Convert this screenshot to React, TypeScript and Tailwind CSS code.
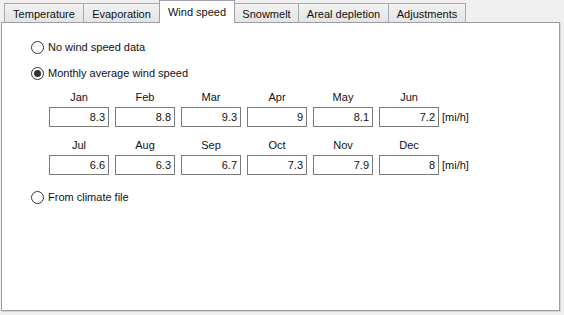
import React from "react";

const tabs = [
  { label: "Temperature", w: 80 },
  { label: "Evaporation", w: 77 },
  { label: "Wind speed", w: 76, selected: true },
  { label: "Snowmelt", w: 65 },
  { label: "Areal depletion", w: 91 },
  { label: "Adjustments", w: 78 },
];

const row1 = [
  ["Jan", "8.3"],
  ["Feb", "8.8"],
  ["Mar", "9.3"],
  ["Apr", "9"],
  ["May", "8.1"],
  ["Jun", "7.2"],
];
const row2 = [
  ["Jul", "6.6"],
  ["Aug", "6.3"],
  ["Sep", "6.7"],
  ["Oct", "7.3"],
  ["Nov", "7.9"],
  ["Dec", "8"],
];

function Radio({ checked, label }: { checked?: boolean; label: string }) {
  return (
    <div className="flex items-center h-[14px] gap-[4px]">
      <div className="w-[13px] h-[13px] rounded-full border border-[#333] bg-white flex items-center justify-center">
        {checked && <div className="w-[7px] h-[7px] rounded-full bg-[#333]" />}
      </div>
      <span className="leading-[14px]">{label}</span>
    </div>
  );
}

function MonthRow({ items, className }: { items: string[][]; className?: string }) {
  return (
    <div className={"flex ml-[18px] " + (className || "")}>
      <div className="flex gap-[6px]">
        {items.map(([m, v]) => (
          <div key={m} className="flex flex-col w-[60px]">
            <div className="h-[14px] leading-[14px] text-center">{m}</div>
            <div className="mt-[3px] h-[20px] border border-[#7a7a7a] bg-white flex items-center justify-end pr-[3px]">
              {v}
            </div>
          </div>
        ))}
      </div>
      <div className="ml-[3px] mt-[17px] h-[20px] flex items-center">[mi/h]</div>
    </div>
  );
}

export default function App() {
  return (
    <div
      className="w-[564px] h-[315px] bg-[#f0f0f0] text-[11px] text-[#111] overflow-hidden"
      style={{ fontFamily: '"Liberation Sans", Arial, sans-serif' }}
    >
      <div className="flex items-end h-[22px] pl-[4px]">
        {tabs.map((t, i) =>
          t.selected ? (
            <div
              key={t.label}
              className="relative z-10 -ml-px h-[23px] -mb-px border border-b-0 border-[#a0a0ab] bg-white flex justify-center pt-[3px]"
              style={{ width: t.w }}
            >
              {t.label}
            </div>
          ) : (
            <div
              key={t.label}
              className={
                "h-[19px] border border-b-0 border-[#a8a8b2] bg-gradient-to-b from-[#f2f2f2] to-[#e4e4e4] flex justify-center pt-[2px] " +
                (i > 0 ? "-ml-px" : "")
              }
              style={{ width: t.w }}
            >
              {t.label}
            </div>
          )
        )}
      </div>
      <div className="ml-[1px] w-[559px] h-[289px] border border-[#9c9ca8] bg-white shadow-[1px_1px_0_#d4d4d8]">
        <div className="pl-[29px] pt-[17px] flex flex-col">
          <Radio label="No wind speed data" />
          <div className="mt-[12px]">
            <Radio checked label="Monthly average wind speed" />
          </div>
          <MonthRow items={row1} className="mt-[10px]" />
          <MonthRow items={row2} className="mt-[11px]" />
          <div className="mt-[15px]">
            <Radio label="From climate file" />
          </div>
        </div>
      </div>
    </div>
  );
}
